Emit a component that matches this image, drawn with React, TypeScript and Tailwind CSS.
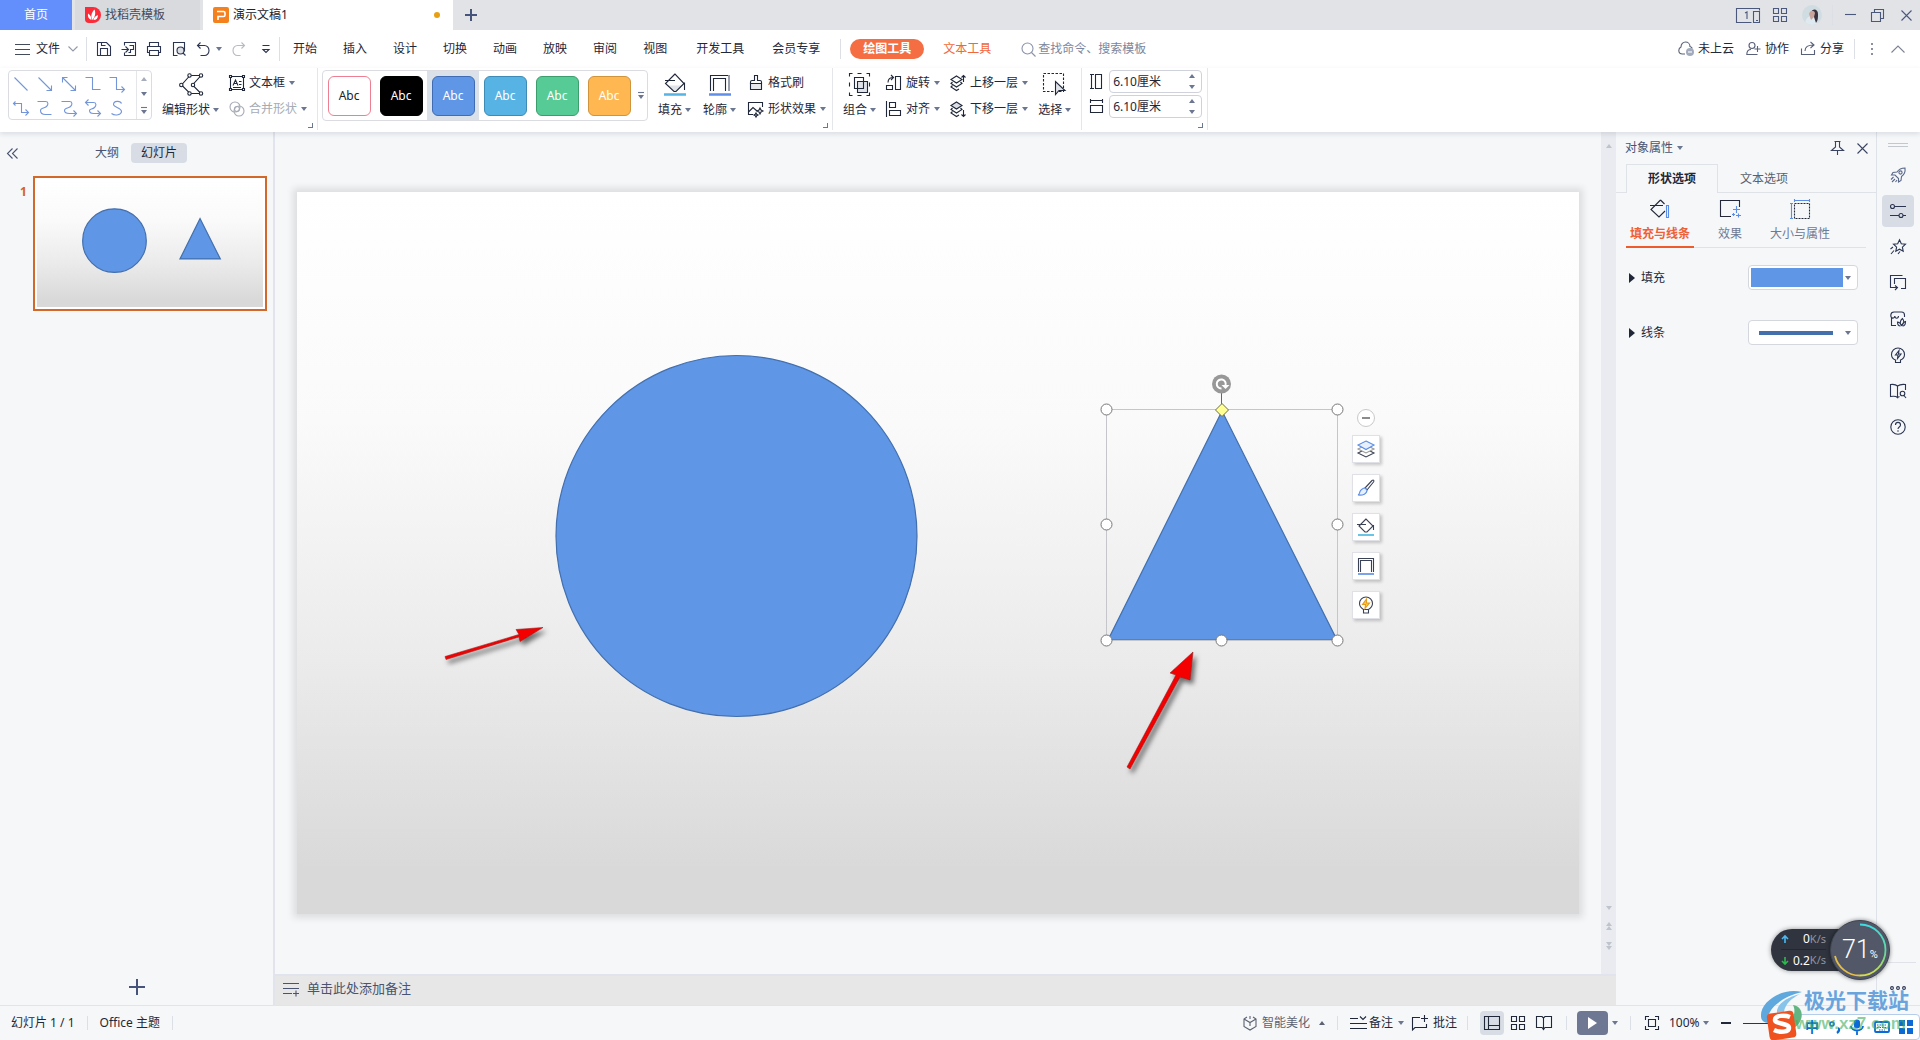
import type { ReactNode } from 'react';

interface IconProps {
  w?: number;
  h?: number;
  snap?: boolean;
  children: ReactNode;
  className?: string;
}

// Stroke icon, one viewBox unit per pixel; snap moves whole-number paths onto pixel centres
function Icon({ w = 16, h = 16, snap = false, children, className = '' }: IconProps) {
  return (
    <svg
      width={w}
      height={h}
      viewBox={snap ? `-0.5 -0.5 ${w} ${h}` : `0 0 ${w} ${h}`}
      fill="none"
      stroke="currentColor"
      strokeWidth="1.1"
      className={`shrink-0 overflow-visible ${className}`}
    >
      {children}
    </svg>
  );
}

function Caret({ up = false, className = 'text-[#6b7690]' }: { up?: boolean; className?: string }) {
  return (
    <svg width="6" height="4" viewBox="0 0 6 4" className={`shrink-0 ${className}`}>
      <path d={up ? 'M0 4h6L3 0z' : 'M0 0h6L3 4z'} fill="currentColor" />
    </svg>
  );
}

function Divider({ className = '' }: { className?: string }) {
  return <div className={`w-px shrink-0 bg-[#dcdfe5] ${className}`} />;
}

/* ---------- title bar ---------- */

function TitleBar() {
  return (
    <header className="flex h-[30px] shrink-0 items-stretch gap-[3px] bg-[#e1e3e7] text-xs">
      <button className="w-[72px] bg-[#628ffc] text-white">首页</button>
      <button className="flex w-[125px] items-center gap-1 bg-[#d8dadd] pl-2.5 text-[#444b5e]">
        <svg width="16" height="16" viewBox="0 0 16 16">
          <path d="M0 0h8a8 8 0 0 1 0 16H4a4 4 0 0 1-4-4z" fill="#fb2b3a" />
          <path d="M7.500 13C5.500 10 6 6 9.500 2.500 11 6 10 10 7.500 13z" fill="#fff" />
          <path d="M6.500 13C3.500 12 2.500 9.500 3 6.500 5.500 8 6.500 10 6.500 13zM8.500 13c0-2 1.500-4 4.500-5 0 3-1.500 5-4.500 5z" fill="#fff" />
        </svg>
        找稻壳模板
      </button>
      <button className="flex w-[250px] items-center gap-1 bg-white pl-2.5 text-[#20242e]">
        <svg width="16" height="16" viewBox="0 0 16 16">
          <rect width="16" height="16" rx="2" fill="#f5811e" />
          <path d="M4 4.500h6.500a1.500 1.500 0 0 1 1.500 1.500v2a1.500 1.500 0 0 1-1.500 1.500H5V13" fill="none" stroke="#fff" strokeWidth="1.600" />
        </svg>
        演示文稿1
        <span className="mr-[13px] ml-auto size-1.5 rounded-full bg-[#e8a013]" />
      </button>
      <button aria-label="新建" className="ml-2 text-[#46537a]">
        <Icon w={14} h={14}>
          <path d="M7 1v12M1 7h12" strokeWidth="2" />
        </Icon>
      </button>
      <div className="ml-auto flex items-center pr-2 text-[#4a587c]">
        <button aria-label="窗口布局">
          <Icon w={24} h={15}>
            <path d="M15.500 14.500H.5V.5h23v2M9 5l2-1v7M17.500 3.500h6v11h-6zM20 12.500h2" />
          </Icon>
        </button>
        <button aria-label="应用" className="ml-[13px]">
          <Icon w={14} h={14}>
            <path d="M.5.5h5v5h-5zM8.500.5h5v5h-5zM.5 8.500h5v5h-5zM8.500 8.500h5v5h-5z" />
          </Icon>
        </button>
        <button aria-label="账户" className="ml-[15px] size-5 overflow-hidden rounded-full">
          <svg width="20" height="20" viewBox="0 0 20 20">
            <rect width="20" height="20" fill="#cfdde2" />
            <path d="M3 20c0-6 3-9 7-9s5 4 5 9z" fill="#dfeaf0" />
            <path d="M9 7c2-4 7-3 7 2 0 4 0 6-2 9l-2-6z" fill="#3a323c" />
            <path d="M7 9c1-4 5-4 6-1l-1 4-3 3z" fill="#c9a59c" />
          </svg>
        </button>
        <Divider className="mx-[10px] h-5 bg-[#c8cbd1]" />
        <button aria-label="最小化" className="ml-0.5">
          <Icon w={11} h={12}>
            <path d="M0 5.500h11" />
          </Icon>
        </button>
        <button aria-label="还原" className="ml-[15px]">
          <Icon w={13} h={13}>
            <path d="M.5 3.500h9v9h-9zM3.500 3.500v-3h9v9h-3" />
          </Icon>
        </button>
        <button aria-label="关闭" className="ml-[17px]">
          <Icon w={11} h={11}>
            <path d="M.5.5l10 10M10.500.5l-10 10" />
          </Icon>
        </button>
      </div>
    </header>
  );
}

/* ---------- menu row ---------- */

const menuTabs = ['开始', '插入', '设计', '切换', '动画', '放映', '审阅', '视图'];

function MenuRow() {
  return (
    <nav className="flex h-[38px] shrink-0 items-center bg-white text-xs text-[#1f2738]">
      <button className="flex items-center gap-1.5 pl-[15px]">
        <Icon w={15} h={12} className="text-[#444c5c]">
          <path d="M0 1.500h15M0 6.500h15M0 11.500h15" />
        </Icon>
        文件
        <Icon w={10} h={6} className="ml-0.5 text-[#9299a8]">
          <path d="M.5.5L5 5 9.500.5" />
        </Icon>
      </button>
      <Divider className="ml-2 h-6" />
      <div className="ml-[9px] flex items-center gap-[9px] text-[#2b3450]">
        <button aria-label="保存">
          <Icon snap>
            <path d="M1 1h9l4 4v9H1zM4 14V7h7v7M5 1v3h4" />
          </Icon>
        </button>
        <button aria-label="输出为PDF">
          <Icon snap>
            <path d="M3 4V1h11v13H3v-3M0 8h7M4 5l3 3-3 3M8 4h4v4H9v3H7" />
          </Icon>
        </button>
        <button aria-label="打印">
          <Icon snap>
            <path d="M3 5V1h9v4M3 11H1V5h13v6h-2M3 9h9v5H3z" />
          </Icon>
        </button>
        <button aria-label="打印预览">
          <Icon snap>
            <path d="M6 14H2V1h11v9" />
            <circle cx="9" cy="9" r="3.500" fill="#dcdfe5" />
            <path d="M11.500 11.500L14 14" />
          </Icon>
        </button>
        <button className="flex items-center gap-1.5" aria-label="撤消">
          <Icon w={14} snap>
            <path d="M4 1L1 4l3 3M1 4h7a4.500 5 0 0 1 0 10H4" />
          </Icon>
          <Caret />
        </button>
        <button className="text-[#b6bac3]" aria-label="恢复">
          <Icon w={14} snap>
            <path d="M10 1l3 3-3 3M13 4H6a4.500 5 0 0 0 0 10h3" />
          </Icon>
        </button>
        <button className="ml-2" aria-label="自定义">
          <Icon w={8} h={9}>
            <path d="M.5.5h7M1 4.500l3 3 3-3z" />
          </Icon>
        </button>
      </div>
      <Divider className="ml-[9px] h-6" />
      <div className="flex">
        {menuTabs.map((t) => (
          <button key={t} className="px-[13px] whitespace-nowrap">
            {t}
          </button>
        ))}
      </div>
      <div className="ml-0.5 flex whitespace-nowrap">
        <button className="px-3.5">开发工具</button>
        <button className="px-3.5">会员专享</button>
      </div>
      <Divider className="ml-1.5 h-5" />
      <button className="ml-[9px] h-5 shrink-0 rounded-full bg-[#f56e43] px-[13px] font-bold text-white">绘图工具</button>
      <button className="ml-[19px] shrink-0 text-[#f0673c]">文本工具</button>
      <label className="ml-[30px] flex items-center gap-0.5 text-[#8a93a8]">
        <Icon w={15} h={15}>
          <circle cx="6.500" cy="6.500" r="5.500" />
          <path d="M10.500 10.500l4 4" />
        </Icon>
        <input aria-label="搜索" placeholder="查找命令、搜索模板" className="w-40 outline-none placeholder:text-[#7d869c]" />
      </label>
      <div className="ml-auto flex shrink-0 items-center pr-[15px]">
        <button className="flex items-center gap-1">
          <Icon className="text-[#59617a]">
            <path d="M7 13H4.500C2 13 .8 11.300.8 9.500S2 6.500 3 6c0-3 2-5 4.500-5S12 3 12 5.500c1 .3 2 1 2.300 2" />
            <circle cx="12" cy="11" r="4" fill="#a2abbd" stroke="none" />
            <path d="M10 11h4" stroke="#fff" />
          </Icon>
          未上云
        </button>
        <button className="ml-3 flex items-center gap-1">
          <Icon w={15} className="text-[#59617a]">
            <circle cx="6" cy="4.500" r="3" />
            <path d="M9 13.500H.8C.8 10 2.500 8.500 5 8.500M11.500 5v6M8.500 8h6M9 13.500h2.500" />
          </Icon>
          协作
        </button>
        <button className="ml-3 flex items-center gap-1">
          <Icon w={15} className="text-[#59617a]">
            <path d="M.5 7.500v6h13V9M4 10c0-4 3-6 8.500-6M9.500 1l3.500 3-3.500 3" />
          </Icon>
          分享
        </button>
        <Divider className="ml-2.5 h-5" />
        <button aria-label="更多" className="ml-4 flex flex-col gap-[3px]">
          <i className="size-0.5 bg-[#8a90a0]" />
          <i className="size-0.5 bg-[#8a90a0]" />
          <i className="size-0.5 bg-[#8a90a0]" />
        </button>
        <button aria-label="折叠功能区" className="ml-[18px] text-[#7b8294]">
          <Icon w={14} h={8}>
            <path d="M.5 7.500L7 1l6.500 6.500" />
          </Icon>
        </button>
      </div>
    </nav>
  );
}

/* ---------- ribbon ---------- */

const connectors = [
  'M2 2l13 13',
  'M2 2l13 13M10 15h5v-5',
  'M2 2l13 13M10 15h5v-5M2 7V2h5',
  'M1 2h7v12h8',
  'M1 2h7v12h8M13 11l3 3-3 3',
  'M3 2L1 4l2 2M1 4h8v9h7M13 10l3 3-3 3',
  'M1 2h8c3 0 3 3 1 5s-6 1-6 4 3 4 5 4h6',
  'M1 2h8c3 0 3 3 1 5s-6 1-6 4 3 3 5 3h6M13 11l3 3-3 3',
  'M4 0L1 3l3 3M1 3h8c3 0 3 3 1 5s-5 1-5 3 2 3 4 3h6M13 11l3 3-3 3',
  'M13 4c-1-3-8-3-8 1 0 3 8 3 8 7 0 3-6 5-10 2',
];

const styles = [
  'border-[#ee7f92] bg-white text-[#222]',
  'border-black bg-black text-white',
  'border-[#3f6cb4] bg-[#5f96e6] text-white',
  'border-[#3e8cb5] bg-[#57b3e3] text-white',
  'border-[#3b9e6c] bg-[#57cb95] text-white',
  'border-[#cf943c] bg-[#ffb851] text-white',
];

interface ToolProps {
  icon: ReactNode;
  label: string;
  caret?: boolean;
  muted?: boolean;
}

function SmallTool({ icon, label, caret = true, muted = false }: ToolProps) {
  return (
    <button className={`flex h-[26px] items-center gap-1 whitespace-nowrap ${muted ? 'text-[#a6abb5]' : ''}`}>
      {icon}
      {label}
      {caret && <Caret />}
    </button>
  );
}

function BigTool({ icon, label }: ToolProps) {
  return (
    <button className="flex h-[54px] flex-col items-center justify-between pt-[5px] whitespace-nowrap">
      {icon}
      <span className="flex items-center gap-[3px] leading-6">
        {label}
        <Caret />
      </span>
    </button>
  );
}

function RibbonGroup({ children, className, launcher = true }: { children: ReactNode; className: string; launcher?: boolean }) {
  return (
    <section className={`relative flex h-[62px] shrink-0 items-start border-r border-[#e4e6ea] ${className}`}>
      {children}
      {launcher && (
        <button aria-label="更多选项" className="absolute right-1 bottom-0.5 size-[5px] border-r border-b border-[#6b7690]" />
      )}
    </section>
  );
}

function GalleryMore() {
  return (
    <Icon w={6} h={7} className="text-[#6b7690]">
      <path d="M0 .5h6" />
      <path d="M0 3h6L3 7z" fill="currentColor" stroke="none" />
    </Icon>
  );
}

function SizeField({ label, value, icon }: { label: string; value: string; icon: ReactNode }) {
  return (
    <label className="flex items-center gap-[5px]">
      {icon}
      <span className="flex h-[23px] w-[93px] items-center rounded-sm border border-[#cfd2da] bg-white pr-1.5 pl-[3px]">
        <input aria-label={label} defaultValue={value} className="w-full min-w-0 outline-none" />
        <span className="flex flex-col gap-[7px]">
          <Caret up />
          <Caret />
        </span>
      </span>
    </label>
  );
}

function Layers({ down = false }: { down?: boolean }) {
  return (
    <Icon>
      <path d="M6.500 1L12 4.500 6.500 8 1 4.500z" fill={down ? '#dcdfe5' : 'none'} />
      <path d="M2.500 7L1 8.500 6.500 12 12 8.500 10.500 7" />
      <path d="M2.500 10.500L1 12l5.500 3.500L9 14" />
      <path d={down ? 'M13.500 9v6.500M11.500 13.500l2 2 2-2' : 'M13.500 7V.5M11.500 2.500l2-2 2 2'} />
    </Icon>
  );
}

function Ribbon() {
  return (
    <div className="relative z-10 flex h-16 shrink-0 bg-white text-xs text-[#1f2738] shadow-[0_2px_5px_rgba(40,50,70,0.13)]">
      <RibbonGroup className="gap-2.5 pr-2.5 pl-2">
        <div className="mt-0.5 flex h-[50px] w-36 rounded-sm border border-[#dadce1]">
          <div className="grid flex-1 grid-cols-5 place-items-center pr-2 text-[#7396da]">
            {connectors.map((d) => (
              <button key={d} aria-label="线条">
                <Icon w={17} h={17} snap>
                  <path d={d} />
                </Icon>
              </button>
            ))}
          </div>
          <div className="flex w-[15px] flex-col items-center justify-around border-l border-[#e4e6ea]">
            <Caret up className="text-[#a5adbd]" />
            <Caret />
            <GalleryMore />
          </div>
        </div>
        <BigTool
          label="编辑形状"
          icon={
            <Icon w={24} h={23}>
              <path d="M11 2.500h11L13.500 12l8.500 8.500H11L2.500 12z" />
              <g fill="#fff">
                <circle cx="10.500" cy="2.500" r="1.700" />
                <circle cx="22" cy="2.500" r="1.700" />
                <circle cx="2.300" cy="12" r="1.700" />
                <circle cx="14" cy="12" r="1.700" />
                <circle cx="10.500" cy="20.500" r="1.700" />
                <circle cx="22" cy="20.500" r="1.700" />
              </g>
            </Icon>
          }
        />
        <div className="mt-0.5 flex flex-col">
          <SmallTool
            label="文本框"
            icon={
              <Icon>
                <path d="M1.500 1.500h13v13h-13z" />
                <path d="M.5.5h2v2h-2zM13.500.5h2v2h-2zM.5 13.500h2v2h-2zM13.500 13.500h2v2h-2z" fill="#fff" />
                <path d="M4 10.500L6.500 5 9 10.500M5 8.500h3M10 6.500h2.500M10 9.500h2.500M4 12.500h8" />
              </Icon>
            }
          />
          <SmallTool
            muted
            label="合并形状"
            icon={
              <Icon>
                <circle cx="6" cy="6" r="5" />
                <circle cx="10" cy="10" r="5" />
                <circle cx="8" cy="8" r="2.500" />
              </Icon>
            }
          />
        </div>
      </RibbonGroup>

      <RibbonGroup className="gap-3 pr-1.5 pl-1">
        <div className="mt-0.5 -mr-0.5 flex h-[51px] rounded-sm border border-[#dadce1]">
          {styles.map((s, i) => (
            <div key={s} className={`flex w-[52px] items-center justify-center ${i === 2 ? 'bg-[#dbe1e8]' : ''}`}>
              <button className={`h-10 w-[43px] rounded-md border ${s}`}>Abc</button>
            </div>
          ))}
          <div className="flex w-3 items-center justify-center">
            <GalleryMore />
          </div>
        </div>
        <BigTool
          label="填充"
          icon={
            <Icon w={22} h={23}>
              <path d="M3 12.500h16L11 19z" fill="#e1e4e8" stroke="none" />
              <path d="M11 1L1.500 10.500 10 18.500h2l8-8zM1 7.500h10M20.500 9.500V17" />
              <path d="M0 21.500h22" stroke="#57b3e3" strokeWidth="2.500" />
            </Icon>
          }
        />
        <BigTool
          label="轮廓"
          icon={
            <Icon w={22} h={23}>
              <path d="M1.500 18V2.500h18" />
              <path d="M4.500 18V5.500h12V18" />
              <path d="M20 2v16" stroke="#9aa0ab" strokeWidth="2" />
              <path d="M0 21.500h22" stroke="#5f8fe8" strokeWidth="2.500" />
            </Icon>
          }
        />
        <div className="mt-0.5 flex flex-col">
          <SmallTool
            label="格式刷"
            caret={false}
            icon={
              <Icon>
                <path d="M2.500 8.500h11v6h-11z" fill="#e6e8ec" />
                <path d="M6.500 5.500v-5h3v5h2.500a1.500 1.500 0 0 1 1.500 1.500v1.500h-11V7A1.500 1.500 0 0 1 4 5.500z" />
              </Icon>
            }
          />
          <SmallTool
            label="形状效果"
            icon={
              <Icon>
                <path d="M5 13.500H.5v-12h14V6M.5 11L5 6.500 9 10" />
                <path d="M12 7l1 2 2 1-2 1-1 2-1-2-2-1 2-1zM8 12l.7 1.300L10 14l-1.300.7L8 16l-.7-1.300L6 14l1.300-.7z" />
              </Icon>
            }
          />
        </div>
      </RibbonGroup>

      <RibbonGroup className="gap-2.5 pr-2.5 pl-2.5" launcher={false}>
        <BigTool
          label="组合"
          icon={
            <Icon w={21} h={23} snap>
              <path d="M8 8h10v11H8z" fill="#dfe2e7" stroke="none" />
              <path d="M5 4h9v11H5zM8 8h10v11H8z" />
              <path d="M0 3V0h3M8 0h4M17 0h3v3M0 9v4M20 9v4M0 19v3h3M8 22h4M17 22h3v-3" />
            </Icon>
          }
        />
        <div className="mt-0.5 flex flex-col">
          <SmallTool
            label="旋转"
            icon={
              <Icon>
                <path d="M9.500 1.500h5v13h-5zM.5 14.500v-4h6v4zM2 7.500C2 4 4 2.500 7.500 2.500M5 0l2.500 2.500L5 5" />
              </Icon>
            }
          />
          <SmallTool
            label="对齐"
            icon={
              <Icon>
                <path d="M.5 0v16M3.500 1.500h6v5h-6zM3.500 9.500h11v5h-11z" />
              </Icon>
            }
          />
        </div>
        <div className="mt-0.5 flex flex-col">
          <SmallTool label="上移一层" icon={<Layers />} />
          <SmallTool label="下移一层" icon={<Layers down />} />
        </div>
        <BigTool
          label="选择"
          icon={
            <Icon w={23} h={23}>
              <path d="M.5.5h20v18H.5z" strokeDasharray="2.500 1.500" />
              <path d="M12.500 8.500v13l3.500-4h6z" fill="#dfe2e7" />
            </Icon>
          }
        />
      </RibbonGroup>

      <RibbonGroup className="pr-[5px] pl-2">
        <div className="mt-0.5 flex flex-col gap-0.5">
          <SizeField
            label="高度"
            value="6.10厘米"
            icon={
              <Icon w={14}>
                <path d="M0 .5h4M0 14.500h4M1.500.5v14M5.500.5h6v14h-6z" />
              </Icon>
            }
          />
          <SizeField
            label="宽度"
            value="6.10厘米"
            icon={
              <Icon w={14}>
                <path d="M.5 0v4M12.500 0v4M.5 1.500h12M.5 6.500h12v7H.5z" />
              </Icon>
            }
          />
        </div>
      </RibbonGroup>
    </div>
  );
}

/* ---------- slide ---------- */

// Circle and triangle shared by the canvas and the thumbnail
function SlideShapes({ children }: { children?: ReactNode }) {
  return (
    <svg viewBox="0 0 1282 722" className="block w-full">
      <defs>
        <filter id="arrowShadow" x="-20%" y="-20%" width="150%" height="150%">
          <feDropShadow dx="3" dy="4" stdDeviation="2.500" floodColor="#000" floodOpacity="0.55" />
        </filter>
      </defs>
      <g fill="#5f96e6" stroke="#426fae" strokeWidth="1.200">
        <circle cx="439.500" cy="344" r="180.500" vectorEffect="non-scaling-stroke" />
        <path d="M925 219L811 448h229z" vectorEffect="non-scaling-stroke" />
      </g>
      {children}
    </svg>
  );
}

const handles = [
  [809.5, 217.5],
  [1040.5, 217.5],
  [809.5, 332.5],
  [1040.5, 332.5],
  [809.5, 448.5],
  [924.5, 448.5],
  [1040.5, 448.5],
];

const slideBg = 'bg-[linear-gradient(180deg,#ffffff_0%,#fafafa_32%,#ebebeb_65%,#d9d9d9_94%)]';

function FloatingTools() {
  const box = 'flex size-7 items-center justify-center border border-[#dfe1e6] bg-white text-[#3b4256] shadow-[2px_2px_3px_rgba(0,0,0,0.2)]';
  return (
    <div className="absolute top-[30%] left-[82%] flex flex-col items-center gap-[11px] pl-1">
      <button
        aria-label="收起"
        className="-mb-[3px] flex size-[18px] items-center justify-center rounded-full border border-[#c9c9c9] bg-white"
      >
        <i className="h-0.5 w-2 bg-[#8b8b8b]" />
      </button>
      <button aria-label="图层" className={box}>
        <Icon w={18} h={18}>
          <path d="M9 9l8 4-8 4-8-4z" />
          <path d="M9 5l8 4-8 4-8-4z" fill="#fff" stroke="#999" />
          <path d="M9 1l8 4-8 4.500L1 5z" fill="#e8f0fd" stroke="#5b8de6" />
        </Icon>
      </button>
      <button aria-label="格式刷" className={box}>
        <Icon w={18} h={18}>
          <path d="M8 9l7-7.500c1.500-1 2.500 0 1.500 1.500L10 11z" />
          <path d="M8 9l2 2c0 4-4 5.500-9 5 1.500-.5 1.500-2 2-3.500S6 9 8 9z" fill="#e8f0fd" stroke="#5b8de6" />
        </Icon>
      </button>
      <button aria-label="填充" className={box}>
        <Icon w={18} h={18}>
          <path d="M9 1L2 8l6 6h2l6-6zM0 6.500h9M16.500 7v5" />
          <path d="M1 17h16" stroke="#45b5e0" strokeWidth="1.600" />
        </Icon>
      </button>
      <button aria-label="轮廓" className={box}>
        <Icon w={18} h={18}>
          <path d="M1.500 15V1.500h15V15M3.500 15V3.500h11V15" />
          <path d="M1 17h16" stroke="#5b8de6" strokeWidth="1.600" />
        </Icon>
      </button>
      <button aria-label="智能美化" className={box}>
        <Icon w={18} h={18}>
          <path d="M6.500 13.500C4 12 2.500 10 2.500 7.500a6.500 6.500 0 0 1 13 0c0 2.500-1.500 4.500-4 6zM6.500 14v3h5v-3" />
          <path d="M9.500 3L5.500 8.500h3L8 12.500l4.500-5.500h-3z" fill="#ffc53a" stroke="#e29a1c" />
        </Icon>
      </button>
    </div>
  );
}

function Canvas() {
  return (
    <main className="flex min-w-0 flex-1 flex-col border-l-2 border-[#e1e4ec]">
      <div className="flex min-h-0 flex-1">
        <div className="flex flex-1 items-center justify-center px-[22px]">
          <div className={`relative w-full shadow-[0_0_7px_4px_rgba(0,0,0,0.1)] ${slideBg}`}>
            <SlideShapes>
              <path d="M809.500 217.500h231v231h-231z" fill="none" stroke="#c4c6ca" />
              <path d="M924.500 198v20" stroke="#666" />
              <circle cx="924.500" cy="192" r="9.500" fill="#989898" />
              <path d="M928.500 193.500a4.500 4.500 0 1 0-4 3" fill="none" stroke="#fff" strokeWidth="2" />
              <path d="M924.500 193h8l-4 4z" fill="#fff" />
              <g fill="#fff" stroke="#777">
                {handles.map(([x, y]) => (
                  <circle key={`${x}-${y}`} cx={x} cy={y} r="5.500" />
                ))}
              </g>
              <path d="M925 211.500l6.500 6.500-6.500 6.500-6.500-6.500z" fill="#ffff93" stroke="#6e6e4a" />
              <g fill="#f50505" stroke="#7d1212" strokeWidth="0.5" filter="url(#arrowShadow)">
                <path d="M148 464.500l74-22-3-5 27-2-23 14-1-4.500-73 22.500z" />
                <path d="M830 575l49-92-6-2 23-21-3 28-10-3-50 92z" />
              </g>
            </SlideShapes>
            <FloatingTools />
          </div>
        </div>
        <div className="flex w-[15px] flex-col items-center bg-[#e9ebf1] py-3 text-[#bfc3cb]">
          <Caret up className="text-[#bfc3cb]" />
          <div className="mt-auto flex flex-col items-center gap-3 pb-3">
            <Caret className="text-[#bfc3cb]" />
            <Icon w={6} h={8}>
              <path d="M0 4h6L3 0zM0 8h6L3 4z" fill="currentColor" stroke="none" />
            </Icon>
            <Icon w={6} h={8}>
              <path d="M0 0h6L3 4zM0 4h6L3 8z" fill="currentColor" stroke="none" />
            </Icon>
          </div>
        </div>
      </div>
      <label className="flex h-[31px] shrink-0 items-center gap-2 border-t-2 border-[#e1e4ec] bg-[#e7e7e7] pb-1 pl-2 text-[13px] text-[#4a5470]">
        <Icon w={16} h={14}>
          <path d="M0 1.500h16M0 6.500h16M0 11.500h9M10 11.500h6M13 8.500v6" />
        </Icon>
        <input aria-label="备注" placeholder="单击此处添加备注" className="flex-1 outline-none placeholder:text-[#4a5470]" />
      </label>
    </main>
  );
}

function SlidePanel() {
  return (
    <aside className="flex w-[273px] shrink-0 flex-col text-xs">
      <div className="flex h-11 items-center pb-0.5 text-[#4a5470]">
        <button aria-label="收起" className="ml-[7px]">
          <Icon w={11} h={11}>
            <path d="M5.500.5l-5 5 5 5M10.500.5l-5 5 5 5" />
          </Icon>
        </button>
        <button className="ml-[77px]">大纲</button>
        <button className="ml-3 h-5 rounded-sm bg-[#d8dde5] px-2.5 text-[#1f2738]">幻灯片</button>
      </div>
      <div className="flex gap-[7px] pr-[6px] pl-5">
        <span className="w-1.5 shrink-0 pt-2 font-bold text-[#d4641e]">1</span>
        <button aria-label="幻灯片 1" className="flex-1 border-2 border-[#d2692b] bg-white p-0.5">
          <div className={slideBg}>
            <SlideShapes />
          </div>
        </button>
      </div>
      <button aria-label="新建幻灯片" className="mt-auto mb-2.5 self-center text-[#46537a]">
        <Icon w={16} h={16}>
          <path d="M8 0v16M0 8h16" strokeWidth="2" />
        </Icon>
      </button>
    </aside>
  );
}

/* ---------- property panel ---------- */

function PropertyRow({ label, option, children }: { label: string; option: string; children: ReactNode }) {
  return (
    <div className="flex h-[25px] items-center pr-[18px] pl-[13px]">
      <svg width="6" height="10" viewBox="0 0 6 10">
        <path d="M0 0l6 5-6 5z" fill="#1f2738" />
      </svg>
      <label htmlFor={option} className="ml-1.5 text-[#1f2738]">
        {label}
      </label>
      <div className="relative ml-auto flex h-full w-[110px] items-center rounded-sm border border-[#d4d7dd] bg-white px-0.5">
        {children}
        <Caret className="mx-1 ml-auto text-[#6b7690]" />
        <select id={option} aria-label={label} className="absolute inset-0 opacity-0" />
      </div>
    </div>
  );
}

function PropertyPanel() {
  return (
    <aside className="w-[260px] shrink-0 text-xs text-[#6f7a94]">
      <div className="flex h-8 items-center pr-2 pl-[9px]">
        <button className="flex items-center gap-1 text-[#4a5470]">
          对象属性
          <Caret />
        </button>
        <button aria-label="固定" className="ml-auto text-[#3a4462]">
          <Icon w={14} h={14}>
            <path d="M3.500.5h6M4.500.5V6L.5 9.500h12L8.500 6V.5M6.500 9.500V14" />
          </Icon>
        </button>
        <button aria-label="关闭" className="ml-3 text-[#3a4462]">
          <Icon w={11} h={11}>
            <path d="M.5.5l10 10M10.500.5l-10 10" />
          </Icon>
        </button>
      </div>
      <div className="flex h-[29px]">
        <div className="w-2.5 border-b border-[#dfe2e6]" />
        <button className="w-[92px] border border-b-0 border-[#dfe2e6] font-bold text-[#1f2738]">形状选项</button>
        <button className="flex-1 border-b border-[#dfe2e6] pt-px pl-[22px] text-left text-[#5d5f6b]">文本选项</button>
      </div>
      <div className="mr-2.5 ml-2.5 flex h-[55px] border-b border-[#dfe2e6] text-center">
        <button className="-mb-px flex w-[68px] flex-col items-center gap-[7px] border-b-2 border-[#ee5c2e] pt-1.5 font-bold text-[#ee6035]">
          <Icon w={20} h={20} className="text-[#23283a]">
            <path d="M10.500 1L1 10.500 9 18l6-6M0 6.500h13M10.500 1l4 4" />
            <path d="M16.500 6.500h2v12h-2z" stroke="#5b8de6" />
          </Icon>
          填充与线条
        </button>
        <button className="ml-6 flex w-6 flex-col items-center gap-[7px] pt-1.5">
          <Icon w={21} h={20} className="text-[#23283a]">
            <path d="M19.500 8V1.500H.5v16H11" />
            <path d="M16.500 7v7M13 10.500h7M18.500 14.500v4M16 16.500h5M13.500 14v3M12 15.500h3" stroke="#5b8de6" />
          </Icon>
          效果
        </button>
        <button className="ml-7 flex flex-col items-center gap-[7px] pt-1.5">
          <Icon w={20} h={20} className="text-[#23283a]">
            <path d="M4.500 4.500h15v15h-15z" strokeDasharray="2 1" />
            <path d="M4 1.500h15.500M4.500 0v3M19.500 0v3M1.500 4v15.500M0 4.500h3M0 19.500h3" stroke="#5b8de6" />
          </Icon>
          大小与属性
        </button>
      </div>
      <div className="flex flex-col gap-[30px] pt-[17px]">
        <PropertyRow label="填充" option="fill">
          <span className="h-[19px] w-[92px] bg-[#5f96e6]" />
        </PropertyRow>
        <PropertyRow label="线条" option="line">
          <span className="ml-2 h-1 w-[74px] bg-[#446fad]" />
        </PropertyRow>
      </div>
    </aside>
  );
}

const sideIcons: { name: string; art: ReactNode }[] = [
  {
    name: '快速启动',
    art: (
      <g stroke="#5a688a">
        <path d="M15 1c-4 0-6 1-8 4L3 5.500 1.500 8 5 8l3.500 3.500V15l2.500-1.500.5-4c3-2 4-4.500 3.500-8.500z" />
        <circle cx="10.500" cy="5.500" r="1.600" />
        <path d="M3.500 10L1 12.500M5 12l-3 3M7 13l-1.500 2" />
      </g>
    ),
  },
  {
    name: '属性',
    art: (
      <>
        <circle cx="2.500" cy="3.500" r="2" />
        <path d="M4.500 3.500H16M0 12.500h9M13 12.500h3" />
        <circle cx="11" cy="12.500" r="2" />
      </>
    ),
  },
  {
    name: '动画',
    art: (
      <>
        <path d="M9.500.8l1.800 3.900 4.200.5-3.100 2.900.8 4.200-3.700-2.100-3.700 2.100.8-4.200L3.500 5.200l4.200-.5z" />
        <path d="M3 8l-2.500 2M4 11.500L1 15M10 12.500l-2 2.500" />
      </>
    ),
  },
  {
    name: '切换',
    art: <path d="M12.500.5H.5v12H7M4.500 9V3.500h11v10H11M5 10.500l2.500 2-2.500 2.500" />,
  },
  {
    name: '素材',
    art: (
      <>
        <path d="M1.500 7v7.500H6M14.500 6V4c0-2-1-3-3-3H4C2 1 1 2 .8 4c-.2 4 3.700 4 4 1 .2 3 3.500 3 3.700 0" />
        <path d="M11.500 14.500c-2-2-1.500-5 1-7 2 2.500 1.500 5-1 7zM10.500 15c-2 0-3-1.500-3-4 2 0 3 1.500 4 3.500M12.500 15c2 0 3-1.500 3-4.500-2 .5-3 2-3.500 4" />
      </>
    ),
  },
  {
    name: '灵感',
    art: (
      <path d="M5.500 13C3 12 1.500 10 1.500 7.500a6.500 6.500 0 0 1 13 0c0 2.500-1.500 4.500-4 5.500v2.500h-5zM9 3.500L5.500 8H8l-.5 3.500L11 7H8.500z" />
    ),
  },
  {
    name: '词典',
    art: (
      <>
        <path d="M7.500 3v11.500C6 13 4 13 .5 13.500v-12C4 1 6 1.500 7.500 3c2-1.500 4-2 8-1.500V7M7.500 14.500l2-1" />
        <circle cx="12.500" cy="10.500" r="2.300" />
        <path d="M14 12.500l2 2.500" />
      </>
    ),
  },
  {
    name: '帮助',
    art: (
      <>
        <circle cx="8" cy="8" r="7.200" />
        <path d="M5.500 6c0-3.500 5-3.500 5 0 0 2-2.500 2-2.500 4M8 11.300v1.500" />
      </>
    ),
  },
];

function SideBar() {
  return (
    <div className="flex w-11 shrink-0 flex-col items-center border-l border-[#dfe2e8] pr-0.5 text-[#2b3450]">
      <div className="mt-[11px] mb-3 h-1 w-5 border-y border-[#c3c7ce]" />
      <div className="flex flex-col gap-1">
        {sideIcons.map(({ name, art }) => (
          <button
            key={name}
            aria-label={name}
            className={`flex size-8 items-center justify-center rounded-sm ${name === '属性' ? 'bg-[#d8dde5]' : ''}`}
          >
            <Icon>{art}</Icon>
          </button>
        ))}
      </div>
      <div className="mt-auto mb-[22px] h-px w-9 bg-[#dfe2e8]" />
      <Icon w={16} h={6} className="mb-[14px]">
        <circle cx="2" cy="3" r="1.400" />
        <circle cx="8" cy="3" r="1.400" />
        <circle cx="14" cy="3" r="1.400" />
      </Icon>
    </div>
  );
}

/* ---------- status bar ---------- */

function StatusBar() {
  return (
    <footer className="flex h-[35px] shrink-0 items-center border-t border-[#e1e4ea] pl-[11px] text-xs whitespace-nowrap text-[#1f2738]">
      <span>幻灯片 1 / 1</span>
      <Divider className="mx-3 h-3.5" />
      <span>Office 主题</span>
      <Divider className="ml-3 h-3.5" />
      <div className="ml-auto flex items-center pr-3">
        <button className="flex items-center gap-[5px] text-[#5c6272]">
          <Icon w={14} h={16}>
            <path d="M4 2L1 4v7.500L7 15l6-3.500V4l-3-2M1 4l6 3.500L13 4M7 7.500V11M7 1v3" />
          </Icon>
          智能美化
          <Caret up className="ml-1 text-[#5c6272]" />
        </button>
        <Divider className="mx-3 h-3.5" />
        <button className="flex items-center gap-0.5">
          <Icon w={17} h={14}>
            <path d="M0 2.500h8M0 7.500h17M0 12.500h17M10 .5l3 3 3-3" />
          </Icon>
          备注
          <Caret className="ml-[3px] text-[#6b7690]" />
        </button>
        <button className="ml-2 flex items-center gap-[5px]">
          <Icon w={16} h={16}>
            <path d="M8 2.500H.5V15L3 12.500h11.500V9M12.500 0v7M9 3.500h7" />
          </Icon>
          批注
        </button>
        <Divider className="mr-3 ml-2.5 h-3.5" />
        <div className="flex gap-0.5">
          <button aria-label="普通视图" className="flex size-6 items-center justify-center rounded-sm bg-[#d8dde5]">
            <Icon w={16} h={14}>
              <path d="M.5.5h15v13H.5zM4.500.5v13M4.500 9.500h11" />
            </Icon>
          </button>
          <button aria-label="幻灯片浏览" className="flex size-6 items-center justify-center">
            <Icon w={14} h={14}>
              <path d="M.5.5h5v5h-5zM8.500.5h5v5h-5zM.5 8.500h5v5h-5zM8.500 8.500h5v5h-5z" />
            </Icon>
          </button>
          <button aria-label="阅读视图" className="flex size-6 items-center justify-center">
            <Icon w={16} h={14}>
              <path d="M7.500 2v12M7.500 2L6 .5H.5v11H6L7.500 13.500 9 11.500h6.500V.5H9z" />
            </Icon>
          </button>
        </div>
        <Divider className="mx-2.5 h-3.5" />
        <button aria-label="放映" className="flex h-6 w-[31px] items-center justify-center rounded-sm bg-[#6f7893]">
          <svg width="9" height="12" viewBox="0 0 9 12">
            <path d="M0 0l9 6-9 6z" fill="#fff" />
          </svg>
        </button>
        <Caret className="ml-1 text-[#6b7690]" />
        <Divider className="mx-3 h-3.5" />
        <button aria-label="适应窗口" className="ml-0.5">
          <Icon w={14} h={14}>
            <path d="M.5 4V.5H4M10 .5h3.500V4M.5 10v3.500H4M10 13.500h3.500V10M3.500 3.500h7v7h-7z" />
          </Icon>
        </button>
        <div className="ml-2.5 flex w-10 items-center">
          <select aria-label="缩放比例" className="w-[34px] appearance-none outline-none">
            <option>100%</option>
          </select>
          <Caret />
        </div>
        <button aria-label="缩小" className="ml-3 h-0.5 w-2.5 bg-[#1f2738]" />
        <input
          type="range"
          aria-label="缩放"
          className="ml-3 h-px w-[165px] appearance-none bg-[#2b3450] [&::-webkit-slider-thumb]:size-2 [&::-webkit-slider-thumb]:appearance-none"
        />
      </div>
    </footer>
  );
}

/* ---------- desktop overlays ---------- */

function SpeedWidget() {
  return (
    <div className="absolute right-[30px] bottom-[60px] z-20 flex h-[60px] items-center text-xs">
      <div className="-mr-8 flex h-[42px] w-[91px] flex-col rounded-l-full bg-[#2f343f] pr-9 pl-2.5 text-white shadow-[0_0_5px_rgba(0,0,0,0.4)]">
        <div className="flex h-[21px] items-center border-b border-[#23272f]">
          <Icon w={8} h={8} className="text-[#4bb8f2]">
            <path d="M4 8V1M1 4l3-3 3 3" strokeWidth="1.600" />
          </Icon>
          <span className="ml-auto">0</span>
          <span className="text-[11px] text-[#8f95a1]">K/s</span>
        </div>
        <div className="flex h-[21px] items-center">
          <Icon w={8} h={8} className="text-[#2db84d]">
            <path d="M4 0v7M1 4l3 3 3-3" strokeWidth="1.600" />
          </Icon>
          <span className="ml-auto">0.2</span>
          <span className="text-[11px] text-[#8f95a1]">K/s</span>
        </div>
      </div>
      <div className="relative flex size-[60px] items-center justify-center rounded-full border border-[#3f4450] bg-[#525868] text-white shadow-[0_0_4px_rgba(0,0,0,0.5)]">
        <svg width="60" height="60" viewBox="0 0 60 60" className="absolute -inset-px" fill="none" strokeWidth="1.800">
          <defs>
            <linearGradient id="ring" x1="0" y1="0" x2="0" y2="1">
              <stop offset="0" stopColor="#3fdde0" />
              <stop offset="0.55" stopColor="#67d99a" />
              <stop offset="1" stopColor="#d9dc4c" />
            </linearGradient>
          </defs>
          <path d="M30 4.500A25.500 25.500 0 0 1 30 55.500" stroke="url(#ring)" />
          <path d="M30 55.500A25.500 25.500 0 0 1 5 36" stroke="#e6bd45" />
        </svg>
        <span className="font-[Roboto] text-[25px] font-light">71</span>
        <span className="mt-2.5 font-[Roboto] text-[11px]">%</span>
      </div>
    </div>
  );
}

function InputBar() {
  return (
    <div className="absolute right-0 bottom-0 z-10 h-[50px] w-40">
      <div className="absolute right-0 bottom-0 flex h-[26px] w-[149px] items-center justify-between rounded-sm border border-[#b4cdea] bg-white pr-1.5 pl-[33px] text-[#0b6ad6]">
        <span className="text-sm font-bold">中</span>
        <Icon w={12} h={14}>
          <circle cx="3" cy="4" r="2" strokeWidth="1.600" />
          <path d="M9 8.500c1.500 0 1.500 3-1 4.500" strokeWidth="2.500" />
        </Icon>
        <Icon w={14} h={16}>
          <rect x="4.500" y="1" width="5" height="8" rx="2.500" fill="currentColor" />
          <path d="M1 7c0 6 12 6 12 0M7 11.500V16" strokeWidth="1.800" />
        </Icon>
        <Icon w={16} h={12}>
          <rect x="1" y="1" width="14" height="10" rx="1" strokeWidth="1.800" />
          <path d="M3 4h10M3 6.500h10M5 9h6" strokeDasharray="1.500 1" />
        </Icon>
        <Icon w={14} h={14}>
          <path d="M0 0h6v6H0zM8 0h6v6H8zM0 8h6v6H0zM8 8h6v6H8z" fill="currentColor" stroke="none" />
        </Icon>
      </div>
      {/* swirl and S badges */}
      <svg width="44" height="50" viewBox="0 0 44 50" className="absolute bottom-0 left-0" fill="none">
        <path d="M42 2C22-3 0 12 1 26c0 6 5 8 11 6C2 26 16 8 42 2z" fill="#5fa8dd" />
        <path d="M40 4C24 8 16 16 17 23l7-1C25 14 32 8 40 4z" fill="#88c3ea" />
        <path d="M33 15c12 2 11 17 1 23-8 5-17 4-21 0 12 1 26-11 20-23z" fill="#62b583" />
        <rect x="8" y="22" width="27" height="27" rx="4" fill="#f0521f" transform="rotate(-8 22 35)" />
        <path d="M30 27c-5-2-15-2-15 3 0 4 14 3 14 8 0 4-9 5-15 2" stroke="#fff" strokeWidth="4.500" />
      </svg>
      <span className="absolute -top-1 right-[11px] text-[21px] leading-7 font-bold whitespace-nowrap text-[#6aa4dd]">极光下载站</span>
      <span className="absolute right-3.5 bottom-1 font-['Liberation_Sans'] text-[17px] leading-6 font-bold text-[#3fae5e]/60">www.xz7.com</span>
    </div>
  );
}

export default function App() {
  return (
    <div className="relative flex h-screen flex-col overflow-hidden bg-[#f5f7f9] font-['Noto_Sans','Noto_Sans_CJK_SC',sans-serif]">
      <TitleBar />
      <MenuRow />
      <Ribbon />
      <div className="flex min-h-0 flex-1">
        <SlidePanel />
        <Canvas />
        <PropertyPanel />
        <SideBar />
      </div>
      <StatusBar />
      <SpeedWidget />
      <InputBar />
    </div>
  );
}
